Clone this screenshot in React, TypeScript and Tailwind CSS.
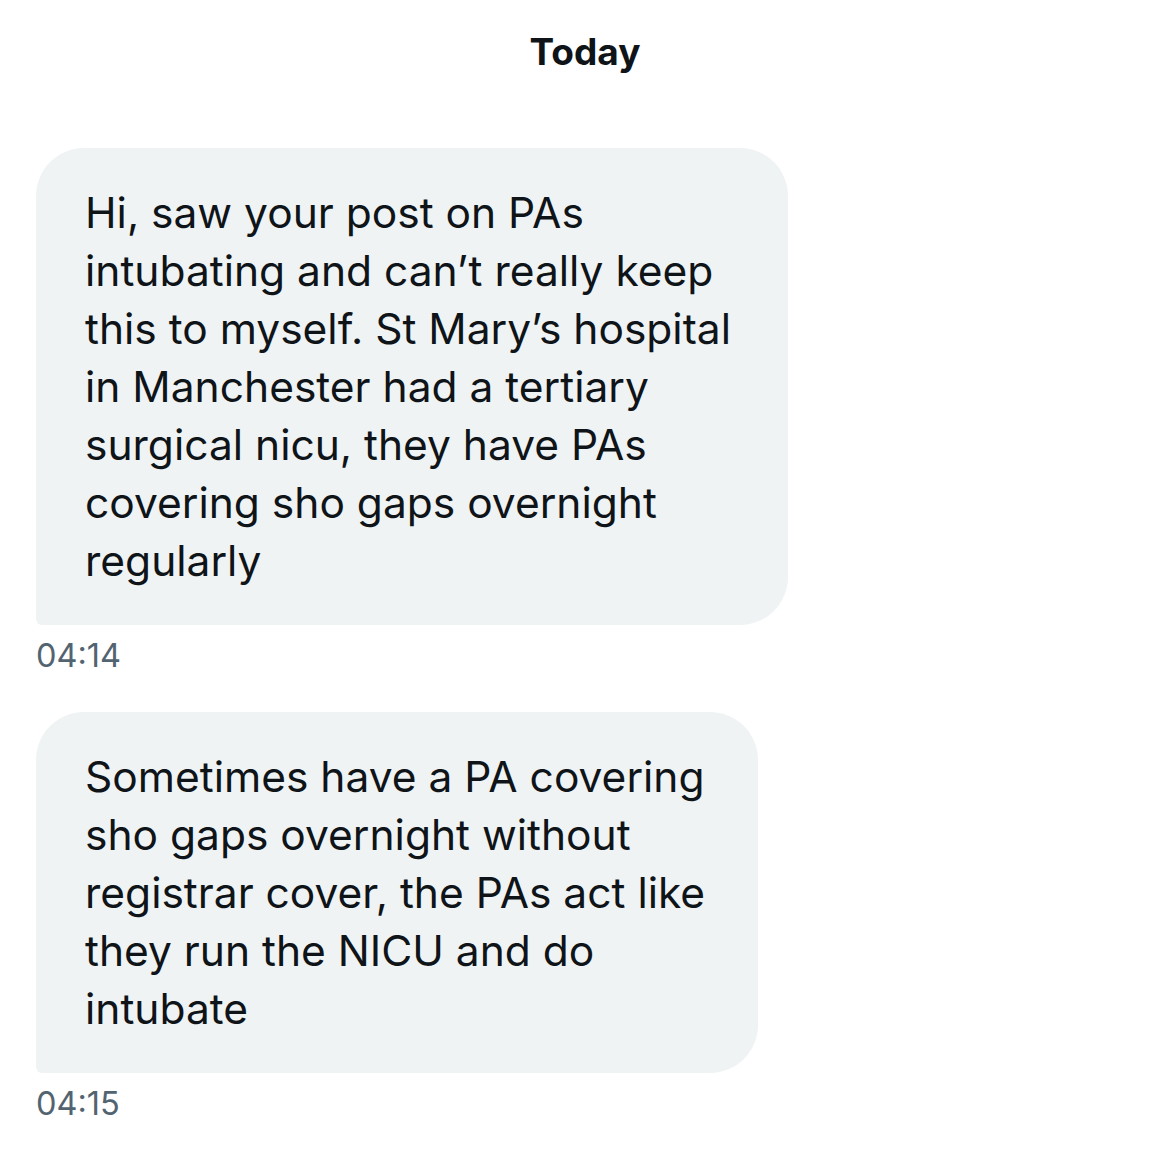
const FONT = { fontFamily: 'Inter, "Noto Sans", sans-serif' };

const messages = [
  {
    lines: [
      "Hi, saw your post on PAs",
      "intubating and can’t really keep",
      "this to myself. St Mary’s hospital",
      "in Manchester had a tertiary",
      "surgical nicu, they have PAs",
      "covering sho gaps overnight",
      "regularly",
    ],
    width: "w-[752px]",
    time: "04:14",
  },
  {
    lines: [
      "Sometimes have a PA covering",
      "sho gaps overnight without",
      "registrar cover, the PAs act like",
      "they run the NICU and do",
      "intubate",
    ],
    width: "w-[722px]",
    time: "04:15",
  },
];

export default function App() {
  return (
    <div className="w-[1170px] h-[1156px] bg-white" style={FONT}>
      <div className="pt-[29px] text-center text-[37px] leading-[46px] font-bold text-[#0f1419]">
        Today
      </div>
      <div className="flex flex-col gap-[36px] px-[36px] pt-[73px]">
        {messages.map((m) => (
          <div key={m.time} className="flex flex-col">
            <div
              className={`${m.width} bg-[#eff3f4] rounded-[48px] rounded-bl-[6px] pl-[49px] pt-[36px] pb-[35px] text-[#0f1419] text-[42.5px] leading-[58px]`}
            >
              {m.lines.map((l) => (
                <div key={l} className="whitespace-nowrap">
                  {l}
                </div>
              ))}
            </div>
            <div className="mt-[11px] text-[32.5px] leading-[40px] text-[#536471]">
              {m.time}
            </div>
          </div>
        ))}
      </div>
    </div>
  );
}
